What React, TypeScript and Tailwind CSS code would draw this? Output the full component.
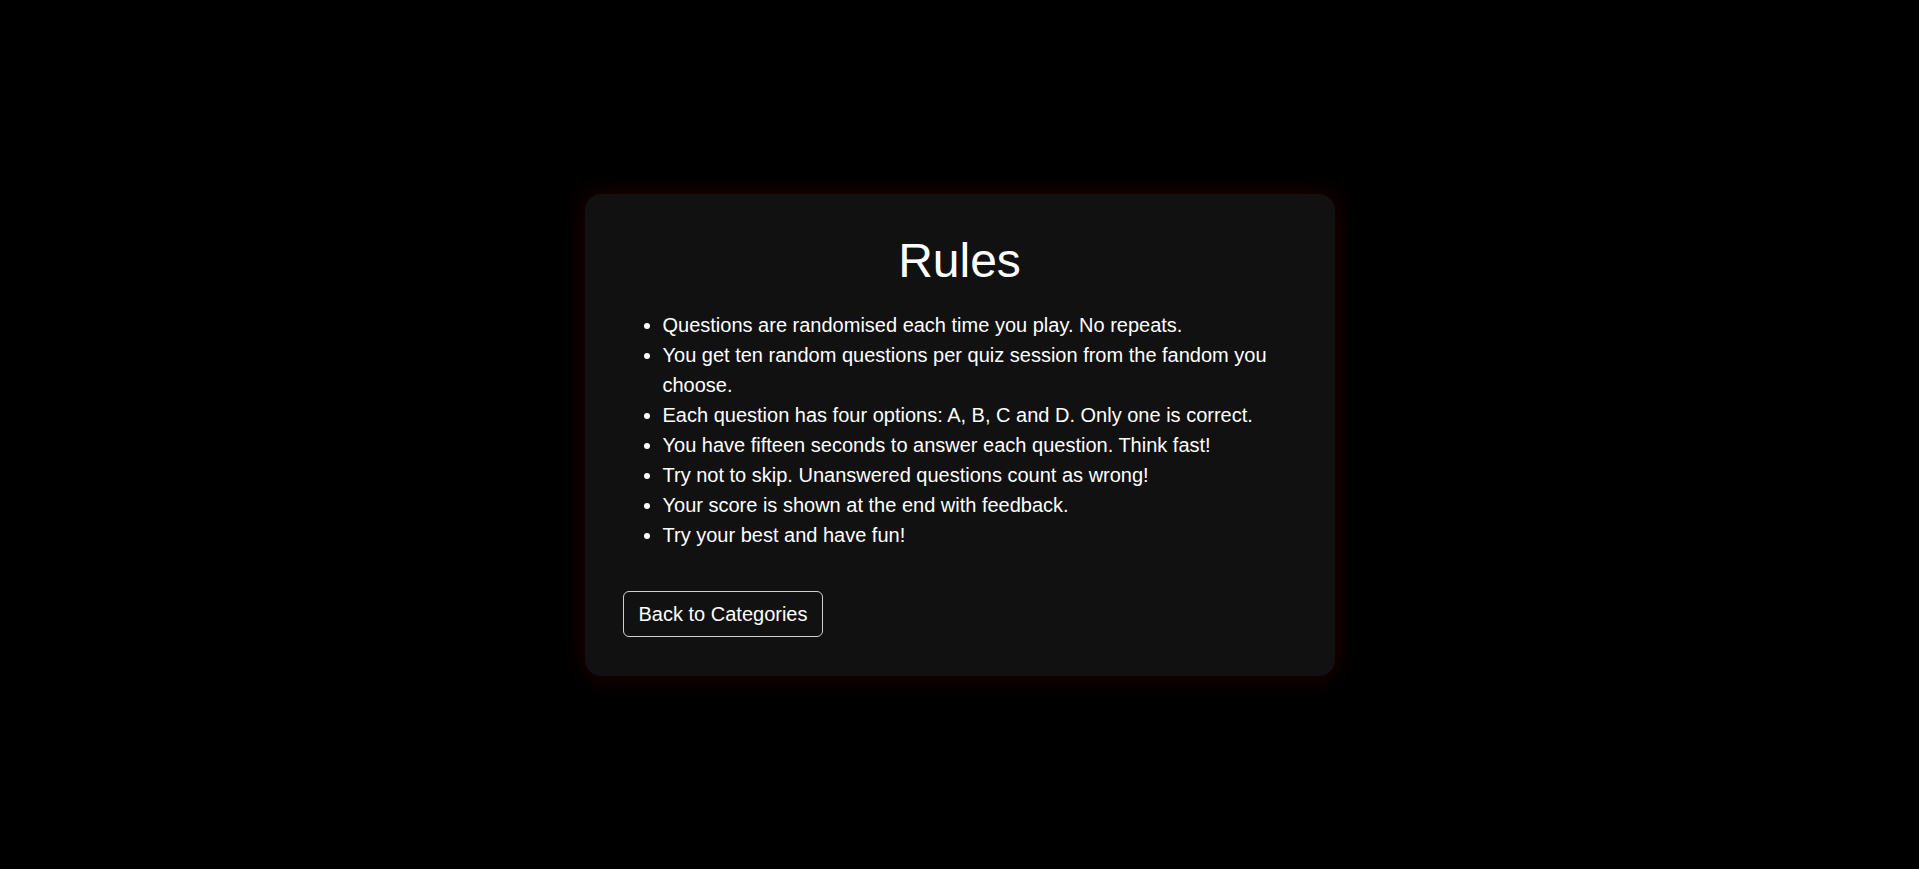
import React from 'react';

const RULES = [
  'Questions are randomised each time you play. No repeats.',
  'You get ten random questions per quiz session from the fandom you choose.',
  'Each question has four options: A, B, C and D. Only one is correct.',
  'You have fifteen seconds to answer each question. Think fast!',
  'Try not to skip. Unanswered questions count as wrong!',
  'Your score is shown at the end with feedback.',
  'Try your best and have fun!',
];

const App: React.FC = () => {
  return (
    <div className="min-h-screen w-full bg-black flex items-center justify-center font-['Liberation_Sans',Arial,sans-serif] text-white">
      <div className="w-[750px] bg-[#111111] rounded-2xl px-[38px] py-[39px] shadow-[0_0_25px_rgba(255,0,0,0.16)]">
        <h1 className="text-[48px] leading-[55px] text-center mb-[22px]">Rules</h1>
        <ul className="list-disc pl-10 text-[20px] leading-[30px]">
          {RULES.map((rule, i) => (
            <li key={i}>{rule}</li>
          ))}
        </ul>
        {/* Back button */}
        <button className="mt-[41px] h-[46px] px-[15px] border border-[#d0d0d0] rounded-md text-[20px] text-white bg-transparent">
          Back to Categories
        </button>
      </div>
    </div>
  );
};

export default App;
